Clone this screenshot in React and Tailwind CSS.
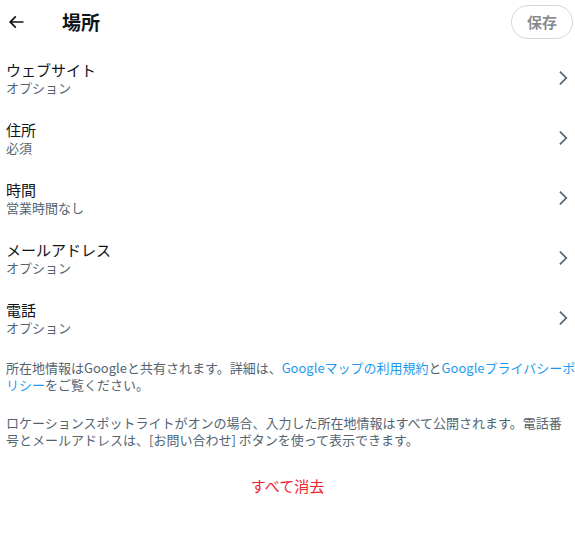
import React from "react";

const rows = [
  ["ウェブサイト", "オプション"],
  ["住所", "必須"],
  ["時間", "営業時間なし"],
  ["メールアドレス", "オプション"],
  ["電話", "オプション"],
];

function Chevron() {
  return (
    <svg width="20" height="20" viewBox="0 0 24 24" fill="#536471">
      <path d="M14.586 12L7.543 4.96l1.414-1.42L17.414 12l-8.457 8.46-1.414-1.42L14.586 12z" />
    </svg>
  );
}

export default function App() {
  return (
    <div
      className="w-[575px] h-[535px] bg-white text-[#0f1419] overflow-hidden"
      style={{ fontFamily: '"Noto Sans CJK JP", "Noto Sans", sans-serif' }}
    >
      <div className="h-[48px] flex items-center pl-[6px] pr-[2px] pb-[4px]">
        <div className="w-[20px] h-[20px] flex items-center justify-center">
          <svg width="20" height="20" viewBox="0 0 24 24" fill="#0f1419">
            <path d="M7.414 13l5.043 5.04-1.414 1.42L3.586 12l7.457-7.46 1.414 1.42L7.414 11H21v2H7.414z" />
          </svg>
        </div>
        <div className="ml-[36px] text-[19px] font-bold leading-6">場所</div>
        <div className="flex-1" />
        <button className="h-[34px] px-[15px] rounded-full border border-[#cfd9de] text-[#0f1419]/50 text-[15px] font-bold leading-5">
          保存
        </button>
      </div>
      {rows.map(([t, s]) => (
        <div key={t} className="h-[60px] flex items-center pl-[6px] pr-[2px]">
          <div className="flex-1 flex flex-col">
            <div className="text-[15px] leading-5">{t}</div>
            <div className="text-[13px] leading-4 text-[#536471]">{s}</div>
          </div>
          <Chevron />
        </div>
      ))}
      <div className="w-[580px] pl-[6px] pt-[11px] text-[13px] leading-[17px] text-[#536471]">
        所在地情報はGoogleと共有されます。詳細は、
        <span className="text-[#1d9bf0]">Googleマップの利用規約</span>と
        <span className="text-[#1d9bf0]">Googleプライバシーポリシー</span>をご覧ください。
      </div>
      <div className="px-[6px] pt-[21px] text-[13px] leading-[17px] text-[#536471]">
        ロケーションスポットライトがオンの場合、入力した所在地情報はすべて公開されます。電話番号とメールアドレスは、[お問い合わせ] ボタンを使って表示できます。
      </div>
      <div className="mt-[28px] text-center text-[15px] leading-5 text-[#f4212e]">
        すべて消去
      </div>
    </div>
  );
}
